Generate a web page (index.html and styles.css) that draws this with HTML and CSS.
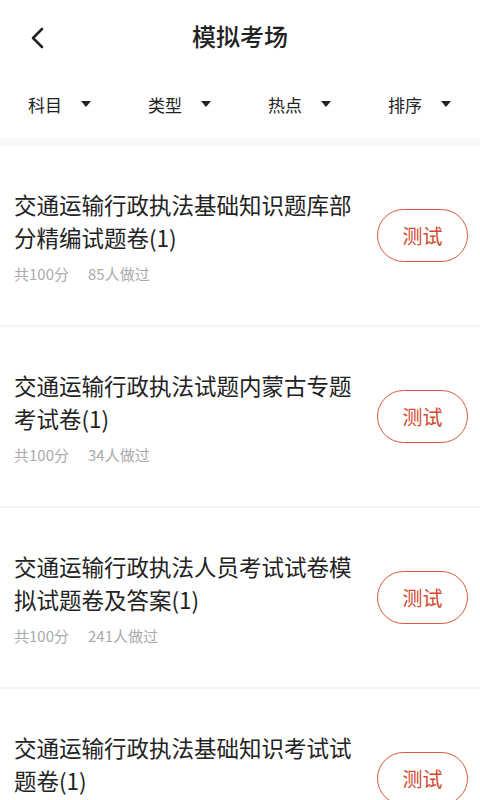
FILE: index.html
```html
<!DOCTYPE html>
<html lang="zh-CN">
<head>
    <meta charset="UTF-8">
    <meta name="viewport" content="width=device-width, initial-scale=1.0">
    <title>模拟考场</title>
    <link rel="stylesheet" href="styles.css">
</head>
<body>
    <div class="header">
        <span class="back">
            <svg width="16" height="22" viewBox="0 0 16 22"><path d="M13 2 L4 11 L13 20" fill="none" stroke="#222" stroke-width="2.6" stroke-linecap="round" stroke-linejoin="round"/></svg>
        </span>
        <h1>模拟考场</h1>
    </div>

    <div class="filters">
        <div class="filter">科目 <span class="caret"></span></div>
        <div class="filter">类型 <span class="caret"></span></div>
        <div class="filter">热点 <span class="caret"></span></div>
        <div class="filter">排序 <span class="caret"></span></div>
    </div>

    <div class="list">
        <div class="item">
            <div class="info">
                <div class="title">交通运输行政执法基础知识题库部分精编试题卷(1)</div>
                <div class="meta"><span>共100分</span><span>85人做过</span></div>
            </div>
            <div class="btn">测试</div>
        </div>
        <div class="item">
            <div class="info">
                <div class="title">交通运输行政执法试题内蒙古专题考试卷(1)</div>
                <div class="meta"><span>共100分</span><span>34人做过</span></div>
            </div>
            <div class="btn">测试</div>
        </div>
        <div class="item">
            <div class="info">
                <div class="title">交通运输行政执法人员考试试卷模拟试题卷及答案(1)</div>
                <div class="meta"><span>共100分</span><span>241人做过</span></div>
            </div>
            <div class="btn">测试</div>
        </div>
        <div class="item">
            <div class="info">
                <div class="title">交通运输行政执法基础知识考试试题卷(1)</div>
                <div class="meta"><span>共100分</span><span>19人做过</span></div>
            </div>
            <div class="btn">测试</div>
        </div>
    </div>
</body>
</html>
```

FILE: styles.css
```css
body {
    margin: 0;
    background-color: #fff;
    font-family: "Noto Sans CJK SC", "Noto Sans", sans-serif;
    color: #222;
    overflow: hidden;
}
.header {
    height: 70px;
    display: flex;
    align-items: center;
    justify-content: center;
    position: relative;
}
.back {
    position: absolute;
    left: 29px;
    top: 27px;
    display: flex;
}
h1 {
    margin: 0;
    font-size: 24px;
    font-weight: 500;
    color: #222;
}
.filters {
    height: 68px;
    display: grid;
    grid-template-columns: repeat(4, 1fr);
    align-items: center;
    border-bottom: 8px solid #f7f7f7;
}
.filter {
    padding-left: 28px;
    font-size: 17px;
    display: flex;
    align-items: center;
    gap: 6px;
}
.caret {
    margin-left: 13px;
    width: 0;
    height: 0;
    border-left: 5px solid transparent;
    border-right: 5px solid transparent;
    border-top: 6px solid #222;
}
.item {
    height: 179px;
    padding: 0 12px 0 14px;
    display: flex;
    align-items: center;
    border-bottom: 2px solid #f5f5f5;
}
.info {
    width: 350px;
}
.title {
    font-size: 22.5px;
    line-height: 33px;
    color: #222;
}
.meta {
    margin-top: 9px;
    font-size: 15px;
    color: #aaa;
    display: flex;
    gap: 19px;
}
.btn {
    margin-left: auto;
    width: 89px;
    height: 51px;
    border: 1.5px solid #d5583e;
    border-radius: 28px;
    color: #cf4a2e;
    font-size: 20px;
    display: flex;
    align-items: center;
    justify-content: center;
}
```
